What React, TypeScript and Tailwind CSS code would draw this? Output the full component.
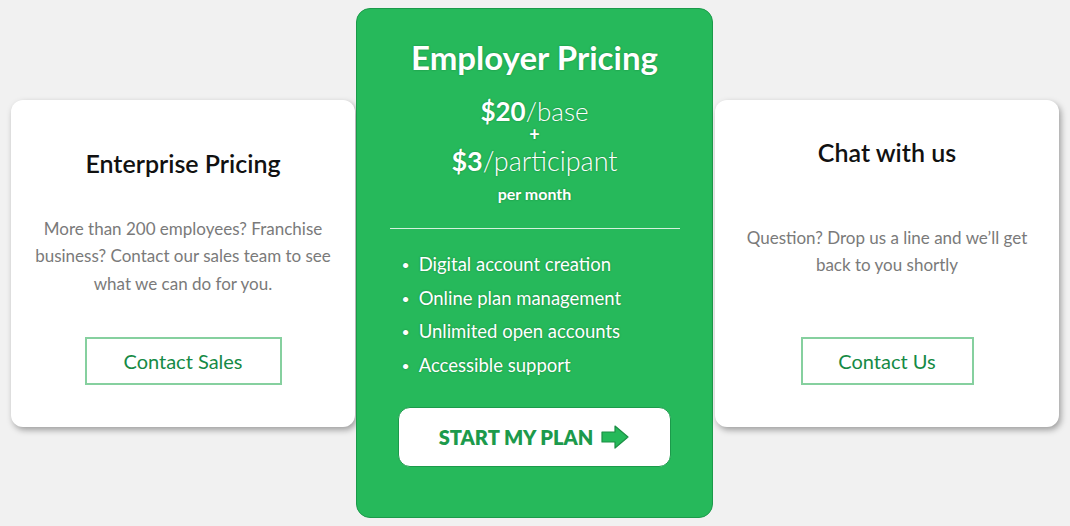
const font = { fontFamily: '"Lato", "Open Sans", sans-serif' };

function ArrowIcon() {
  return (
    <svg width="30" height="24" viewBox="0 0 30 24" className="ml-[7px]">
      <path d="M2 7h13V1l13 11-13 11v-6H2z" fill="#25b95a" stroke="#1c8f45" strokeWidth="1.2" strokeLinejoin="round" />
    </svg>
  );
}

function SideCard({
  title,
  text,
  cta,
  btnW,
  titleMt,
  textMt,
}: {
  title: string;
  text: React.ReactNode;
  cta: string;
  btnW: string;
  titleMt: string;
  textMt: string;
}) {
  return (
    <div className="flex h-[327px] w-[344px] flex-col items-center rounded-[12px] bg-white shadow-[2px_3px_6px_rgba(0,0,0,0.35)]">
      <h2 className={`${titleMt} text-[25px] font-semibold leading-[30px] text-[#111]`}>{title}</h2>
      <p className={`${textMt} px-2 text-center text-[17px] leading-[27.5px] text-[#7a7a7a]`}>{text}</p>
      <button
        className={`mt-auto mb-[42px] h-[48px] ${btnW} border-2 border-[#86d09f] text-[20px] text-[#158a45]`}
      >
        {cta}
      </button>
    </div>
  );
}

export default function App() {
  return (
    <main style={font} className="flex h-[526px] w-full items-center bg-[#f1f1f1] pl-[11px]">
      <SideCard
        title="Enterprise Pricing"
        titleMt="mt-[48px]"
        textMt="mt-[37px]"
        text={
          <>
            More than 200 employees? Franchise
            <br />
            business? Contact our sales team to see
            <br />
            what we can do for you.
          </>
        }
        cta="Contact Sales"
        btnW="w-[197px]"
      />
      <div className="ml-[1px] mr-[2px] flex h-[510px] w-[357px] flex-col items-center rounded-[14px] border border-[#1b9a4a] bg-[#26b95b] text-white [text-shadow:0_0_2px_rgba(0,70,25,0.45)]">
        <h1 className="mt-[28px] text-[33px] font-bold leading-[40px]">Employer Pricing</h1>
        <div className="mt-[22px] text-[26px] leading-[24px]">
          <span className="font-bold">$20</span>
          <span className="font-light">/base</span>
        </div>
        <div className="text-[18px] font-bold leading-[23px]">+</div>
        <div className="text-[27px] leading-[30px]">
          <span className="font-bold">$3</span>
          <span className="font-light">/participant</span>
        </div>
        <div className="mt-[8px] text-[16px] font-bold leading-[20px]">per month</div>
        <div className="mt-[24px] h-px w-[290px] bg-white/80" />
        <ul className="mt-[19px] w-[290px] pl-[12px] text-[18.5px] leading-[33.5px]">
          {['Digital account creation', 'Online plan management', 'Unlimited open accounts', 'Accessible support'].map((t) => (
            <li key={t} className="flex items-center">
              <span className="mr-[9px] text-[14px]">•</span>
              {t}
            </li>
          ))}
        </ul>
        <button className="mt-[25px] flex h-[60px] w-[273px] items-center justify-center rounded-[12px] border border-[#1c9a4b] bg-white text-[20px] font-extrabold text-[#1c9a4c] [text-shadow:none]">
          START MY PLAN
          <ArrowIcon />
        </button>
      </div>
      <SideCard
        title="Chat with us"
        titleMt="mt-[37px]"
        textMt="mt-[57px]"
        text={
          <>
            Question? Drop us a line and we’ll get
            <br />
            back to you shortly
          </>
        }
        cta="Contact Us"
        btnW="w-[173px]"
      />
    </main>
  );
}
